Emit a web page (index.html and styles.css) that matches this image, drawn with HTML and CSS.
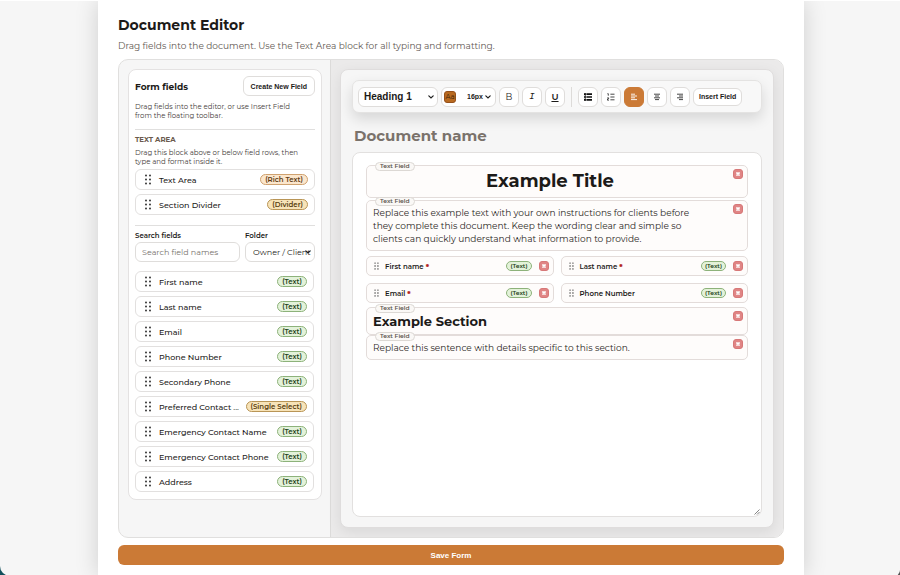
FILE: index.html
```html
<html lang="en">
<head>
    <meta charset="UTF-8">
    <meta name="viewport" content="width=device-width, initial-scale=1.0">
    <title>Document Editor</title>
    <link rel="stylesheet" href="styles.css">
</head>
<body>
    <!-- shared icons -->
    <svg class="sprite" aria-hidden="true">
        <symbol id="grip" viewBox="0 0 6 11">
            <circle cx="1" cy="1.5" r="0.9"/><circle cx="5" cy="1.5" r="0.9"/>
            <circle cx="1" cy="5.5" r="0.9"/><circle cx="5" cy="5.5" r="0.9"/>
            <circle cx="1" cy="9.5" r="0.9"/><circle cx="5" cy="9.5" r="0.9"/>
        </symbol>
        <symbol id="chevron" viewBox="0 0 6 4">
            <path d="M0.8 0.8 L3 3 L5.2 0.8" fill="none" stroke="#222" stroke-width="1.2" stroke-linecap="round"/>
        </symbol>
        <symbol id="cross" viewBox="0 0 4 4">
            <rect x="0.3" y="0.3" width="3.4" height="3.4" fill="#fff" opacity="0.65"/>
            <path d="M0.5 0.5 L3.5 3.5 M3.5 0.5 L0.5 3.5" stroke="#fff" stroke-width="1.2"/>
        </symbol>
    </svg>

    <main class="page">
        <h1>Document Editor</h1>
        <p class="subtitle">Drag fields into the document. Use the Text Area block for all typing and formatting.</p>

        <div class="workspace">
            <aside class="side">
                <div class="panel">
                    <div class="panel-head">
                        <h2>Form fields</h2>
                        <button class="btn" type="button">Create New Field</button>
                    </div>
                    <p class="hint">Drag fields into the editor, or use Insert Field<br>from the floating toolbar.</p>

                    <section class="group">
                        <h3>TEXT AREA</h3>
                        <p class="hint">Drag this block above or below field rows, then<br>type and format inside it.</p>
                        <ul class="list">
                            <li class="item"><svg class="grip"><use href="#grip"/></svg><span class="name">Text Area</span><span class="tag rich">(Rich Text)</span></li>
                            <li class="item"><svg class="grip"><use href="#grip"/></svg><span class="name">Section Divider</span><span class="tag amber">(Divider)</span></li>
                        </ul>
                    </section>

                    <section class="group">
                        <div class="filters">
                            <div>
                                <label for="search">Search fields</label>
                                <input id="search" class="control" type="text" placeholder="Search field names">
                            </div>
                            <div>
                                <label for="folder">Folder</label>
                                <div class="select">
                                    <select id="folder" class="control">
                                        <option>Owner / Client</option>
                                    </select>
                                    <svg class="chevron"><use href="#chevron"/></svg>
                                </div>
                            </div>
                        </div>
                        <ul class="list fields">
                            <li class="item"><svg class="grip"><use href="#grip"/></svg><span class="name">First name</span><span class="tag">(Text)</span></li>
                            <li class="item"><svg class="grip"><use href="#grip"/></svg><span class="name">Last name</span><span class="tag">(Text)</span></li>
                            <li class="item"><svg class="grip"><use href="#grip"/></svg><span class="name">Email</span><span class="tag">(Text)</span></li>
                            <li class="item"><svg class="grip"><use href="#grip"/></svg><span class="name">Phone Number</span><span class="tag">(Text)</span></li>
                            <li class="item"><svg class="grip"><use href="#grip"/></svg><span class="name">Secondary Phone</span><span class="tag">(Text)</span></li>
                            <li class="item"><svg class="grip"><use href="#grip"/></svg><span class="name">Preferred Contact ...</span><span class="tag amber">(Single Select)</span></li>
                            <li class="item"><svg class="grip"><use href="#grip"/></svg><span class="name">Emergency Contact Name</span><span class="tag">(Text)</span></li>
                            <li class="item"><svg class="grip"><use href="#grip"/></svg><span class="name">Emergency Contact Phone</span><span class="tag">(Text)</span></li>
                            <li class="item"><svg class="grip"><use href="#grip"/></svg><span class="name">Address</span><span class="tag">(Text)</span></li>
                        </ul>
                    </section>
                </div>
            </aside>

            <div class="stage">
                <div class="editor">
                    <div class="toolbar">
                        <div class="select heading">
                            <select class="tool" aria-label="Block style">
                                <option>Heading 1</option>
                            </select>
                            <svg class="chevron"><use href="#chevron"/></svg>
                        </div>
                        <div class="tool size">
                            <button class="swatch" type="button" aria-label="Text color">Aa</button>
                            <div class="select">
                                <select aria-label="Font size">
                                    <option>16px</option>
                                </select>
                                <svg class="chevron"><use href="#chevron"/></svg>
                            </div>
                        </div>
                        <button class="tool" type="button">B</button>
                        <button class="tool italic" type="button">I</button>
                        <button class="tool underline" type="button">U</button>
                        <span class="sep"></span>
                        <button class="tool" type="button" aria-label="Bulleted list">
                            <svg width="8" height="8" viewBox="0 0 8 8"><path d="M0 1.2h1.8M2.4 1.2H8M0 4h1.8M2.4 4H8M0 6.8h1.8M2.4 6.8H8" stroke="#111" stroke-width="1.7"/><path d="M1.2 0v8" stroke="#111" stroke-width="0.8"/></svg>
                        </button>
                        <button class="tool" type="button" aria-label="Numbered list">
                            <svg width="8" height="8" viewBox="0 0 8 8"><path d="M3.4 1.2H7.5M3.4 4H7.5M3.4 6.8H7.5" stroke="#333" stroke-width="0.9"/><path d="M0.4 0.7h0.9v2M0.3 4.8h1.3v1.1H0.5v1.3h1.4" fill="none" stroke="#222" stroke-width="0.8"/></svg>
                        </button>
                        <button class="tool active" type="button" aria-label="Align left">
                            <svg width="8" height="8" viewBox="0 0 8 8"><path d="M1 1.2h4M1 3h6M1 4.8h4M1 6.6h6" stroke="#fff" stroke-width="0.9"/></svg>
                        </button>
                        <button class="tool" type="button" aria-label="Align center">
                            <svg width="8" height="8" viewBox="0 0 8 8"><path d="M1 1.2h6M2 3h4M1 4.8h6M2 6.6h4" stroke="#333" stroke-width="0.9"/></svg>
                        </button>
                        <button class="tool" type="button" aria-label="Align right">
                            <svg width="8" height="8" viewBox="0 0 8 8"><path d="M1 1.2h6M3 3h4M1 4.8h6M3 6.6h4" stroke="#333" stroke-width="0.9"/></svg>
                        </button>
                        <button class="btn insert" type="button">Insert Field</button>
                    </div>

                    <input class="doc-name" type="text" placeholder="Document name" aria-label="Document name">

                    <div class="canvas">
                        <div class="block">
                            <span class="badge">Text Field</span>
                            <button class="remove" type="button" aria-label="Remove"><svg><use href="#cross"/></svg></button>
                            <h1 class="doc-title">Example Title</h1>
                        </div>
                        <div class="block">
                            <span class="badge">Text Field</span>
                            <button class="remove" type="button" aria-label="Remove"><svg><use href="#cross"/></svg></button>
                            <p>Replace this example text with your own instructions for clients before<br>they complete this document. Keep the wording clear and simple so<br>clients can quickly understand what information to provide.</p>
                        </div>
                        <div class="rows">
                            <div class="field"><svg class="grip"><use href="#grip"/></svg><span class="name">First name <b>*</b></span><span class="tag">(Text)</span><button class="remove" type="button" aria-label="Remove"><svg><use href="#cross"/></svg></button></div>
                            <div class="field"><svg class="grip"><use href="#grip"/></svg><span class="name">Last name <b>*</b></span><span class="tag">(Text)</span><button class="remove" type="button" aria-label="Remove"><svg><use href="#cross"/></svg></button></div>
                            <div class="field"><svg class="grip"><use href="#grip"/></svg><span class="name">Email <b>*</b></span><span class="tag">(Text)</span><button class="remove" type="button" aria-label="Remove"><svg><use href="#cross"/></svg></button></div>
                            <div class="field"><svg class="grip"><use href="#grip"/></svg><span class="name">Phone Number</span><span class="tag">(Text)</span><button class="remove" type="button" aria-label="Remove"><svg><use href="#cross"/></svg></button></div>
                        </div>
                        <div class="block tight">
                            <span class="badge">Text Field</span>
                            <button class="remove" type="button" aria-label="Remove"><svg><use href="#cross"/></svg></button>
                            <h2 class="doc-section">Example Section</h2>
                        </div>
                        <div class="block tight">
                            <span class="badge">Text Field</span>
                            <button class="remove" type="button" aria-label="Remove"><svg><use href="#cross"/></svg></button>
                            <p>Replace this sentence with details specific to this section.</p>
                        </div>
                        <svg class="resize" viewBox="0 0 6 6"><path d="M0.5 5.5L5.5 0.5M3 5.5L5.5 3" stroke="#777" stroke-width="0.9"/></svg>
                    </div>
                </div>
            </div>
        </div>

        <button class="save" type="submit">Save Form</button>
    </main>
</body>
</html>
```

FILE: styles.css
```css
*{
    box-sizing: border-box;
}
html{
    background: linear-gradient(90deg, #12505c 50%, #555 50%);
}
body{
    margin: 0;
    padding-left: 2px;
    min-height: 100vh;
    background: #f6f6f6;
    border-top: 1px solid #fff;
    border-radius: 0 0 6px 10px;
    color: #1c1a18;
    font-family: Montserrat, Inter, "Open Sans", sans-serif;
    font-size: 8px;
    overflow: hidden;
}
h1, h2, h3, p, ul{
    margin: 0;
    padding: 0;
}
button, input, select{
    margin: 0;
    font-family: inherit;
    color: inherit;
}
.sprite{
    position: absolute;
    width: 0;
    height: 0;
}
.page{
    display: flex;
    flex-direction: column;
    max-width: 706px;
    min-height: 100vh;
    margin: 0 auto;
    padding: 14px 20px 11px;
    background: #fff;
    box-shadow: 0 0 22px rgba(0, 0, 0, .16);
}
.page > h1{
    font-size: 14px;
    line-height: 20px;
}
.subtitle{
    margin-top: 4px;
    color: #5f5852;
    font-size: 9px;
    line-height: 14px;
}

/* two column workspace */
.workspace{
    flex: 1;
    display: grid;
    grid-template-columns: 212px 1fr;
    margin-top: 6px;
    border: 1px solid #e0dfde;
    border-radius: 10px;
    background: #f6f6f6;
    overflow: hidden;
}
.side{
    padding: 9px 8px 9px 9px;
    border-right: 1px solid #dcdbda;
}
.panel{
    padding: 6px 6px 7px;
    background: #fff;
    border: 1px solid #e4e2e2;
    border-radius: 8px;
}
.panel-head{
    display: flex;
    justify-content: space-between;
    align-items: center;
}
.panel-head h2{
    font-size: 9px;
}
.btn{
    height: 20px;
    padding: 0 7px;
    background: #fff;
    border: 1px solid #dfdddb;
    border-radius: 6px;
    font-family: "Liberation Sans", Arial, sans-serif;
    font-size: 7px;
    font-weight: bold;
}
.hint{
    color: #46403b;
    font-size: 7px;
    line-height: 9px;
}
.panel-head + .hint{
    margin-top: 6px;
}
.group{
    margin-top: 9px;
    padding-top: 5px;
    border-top: 1px solid #e0dfde;
}
.group h3{
    margin-bottom: 3px;
    color: #6a5a4c;
    font-size: 7px;
    line-height: 10px;
}
.list{
    display: grid;
    gap: 4px;
    margin-top: 3px;
    list-style: none;
}
.item{
    display: flex;
    align-items: center;
    height: 21px;
    padding: 0 6px 0 9px;
    background: #fff;
    border: 1px solid #e2e0df;
    border-radius: 6px;
}
.grip{
    flex: none;
    width: 6px;
    height: 11px;
    fill: #222;
}
.name{
    flex: 1;
    margin-left: 8px;
    font-size: 8px;
    font-weight: 500;
    white-space: nowrap;
}
.tag{
    padding: 0 4px;
    background: #e3f2d9;
    border: 1px solid #8db27a;
    border-radius: 6px;
    color: #24421a;
    font-size: 7px;
    font-weight: 600;
    line-height: 9px;
}
.tag.rich{
    background: #fbe6cc;
    border-color: #cfa270;
    color: #5e3a12;
}
.tag.amber{
    background: #f7e3b8;
    border-color: #b99556;
    color: #59400f;
}
.group + .group{
    margin-top: 10px;
}
.filters{
    display: grid;
    grid-template-columns: 3fr 2fr;
    gap: 5px;
}
.filters label{
    display: block;
    margin-bottom: 2px;
    font-size: 7px;
    font-weight: 600;
    line-height: 9px;
}
.control{
    display: block;
    width: 100%;
    height: 20px;
    padding: 0 6px;
    background: #fff;
    border: 1px solid #dfdddb;
    border-radius: 6px;
    font-size: 8px;
}
.control::placeholder{
    color: #77716c;
}
.select{
    position: relative;
}
.select select{
    appearance: none;
}
.chevron{
    position: absolute;
    right: 4px;
    top: 50%;
    width: 6px;
    height: 4px;
    margin-top: -2px;
    pointer-events: none;
}
.select .control{
    padding: 0 2px 0 7px;
}
.fields{
    margin: 9px 1px 0 0;
}

/* document side */
.stage{
    display: flex;
    padding: 9px;
    background: #ebeaea;
}
.editor{
    flex: 1;
    display: flex;
    flex-direction: column;
    padding: 10px 11px;
    background: #f6f6f6;
    border: 1px solid #dfdddd;
    border-radius: 8px;
    box-shadow: 0 4px 14px rgba(0, 0, 0, .08);
}
.toolbar{
    display: flex;
    align-items: center;
    gap: 3px;
    height: 33px;
    padding: 0 5px;
    background: #f8f8f8;
    border: 1px solid #e4e3e2;
    border-radius: 7px;
    box-shadow: 0 6px 14px rgba(0, 0, 0, .13);
}
.tool{
    display: flex;
    align-items: center;
    justify-content: center;
    width: 20px;
    height: 20px;
    padding: 0;
    background: #fff;
    border: 1px solid #dfdddb;
    border-radius: 6px;
    font-size: 9px;
}
.heading .tool{
    width: 80px;
    padding-left: 5px;
    font-family: "Liberation Sans", Arial, sans-serif;
    font-size: 10px;
    font-weight: bold;
}
.size{
    justify-content: space-between;
    width: 55px;
    padding-left: 2px;
}
.swatch{
    width: 12px;
    height: 12px;
    padding: 0;
    background: #b96a20;
    border: 1px solid #95501a;
    border-radius: 3px;
    color: #3a1f08;
    font-size: 7px;
    line-height: 10px;
}
.size select{
    width: 28px;
    padding: 0;
    background: none;
    border: 0;
    font-family: "Liberation Sans", Arial, sans-serif;
    font-size: 7px;
    font-weight: bold;
}
.italic{
    font-family: "Liberation Mono", monospace;
    font-style: italic;
}
.underline{
    font-weight: 600;
    text-decoration: underline;
}
.active{
    background: #cb7a36;
    border-color: #cb7a36;
}
.sep{
    width: 1px;
    height: 20px;
    margin: 0 3px;
    background: #dddbd9;
}
.insert{
    height: 18px;
    padding: 0 5px;
}
.doc-name{
    width: 100%;
    height: 20px;
    margin-top: 12px;
    padding: 0 2px;
    background: none;
    border: 0;
    font-size: 15px;
    font-weight: bold;
}
.doc-name::placeholder{
    color: #7a726b;
}
.canvas{
    position: relative;
    flex: 1;
    margin-top: 7px;
    padding: 12px 13px;
    background: #fff;
    border: 1px solid #e2e0df;
    border-radius: 8px;
}
.block{
    position: relative;
    margin-bottom: 2px;
    padding: 5px 20px 5px 6px;
    background: #fefcfb;
    border: 1px solid #e3dcda;
    border-radius: 5px;
}
.block p{
    color: #2c2825;
    font-size: 9px;
    line-height: 13px;
}
.badge{
    position: absolute;
    top: -4px;
    left: 8px;
    padding: 0 4px;
    background: #faf8f6;
    border: 1px solid #dcd8d4;
    border-radius: 5px;
    color: #5d554e;
    font-size: 6px;
    font-weight: 600;
    line-height: 7px;
}
.remove{
    display: flex;
    align-items: center;
    justify-content: center;
    width: 10px;
    height: 10px;
    padding: 0;
    background: #e08585;
    border: 1px solid #d77878;
    border-radius: 3px;
}
.remove svg{
    width: 4px;
    height: 4px;
}
.block .remove{
    position: absolute;
    top: 3px;
    right: 4px;
}
.doc-title{
    font-size: 18px;
    line-height: 21px;
    text-align: center;
}
.doc-section{
    font-size: 13px;
    line-height: 16px;
}
.rows{
    display: grid;
    grid-template-columns: 1fr 1fr;
    gap: 7px;
    margin: 5px 0 4px;
}
.field{
    display: flex;
    align-items: center;
    height: 20px;
    padding: 0 4px 0 7px;
    background: #fefcfb;
    border: 1px solid #e3dcda;
    border-radius: 5px;
}
.field .grip{
    width: 5px;
    height: 8px;
}
.field .name{
    margin-left: 6px;
    font-size: 7px;
    font-weight: 600;
}
.field .name b{
    color: #b3261e;
}
.field .tag{
    margin-right: 7px;
    padding: 0 3px;
    font-size: 6px;
    line-height: 8px;
}
.tight{
    margin-bottom: 0;
}
.resize{
    position: absolute;
    right: 1px;
    bottom: 1px;
    width: 6px;
    height: 6px;
}
.save{
    display: block;
    flex: none;
    width: 100%;
    height: 20px;
    margin-top: 7px;
    background: #cb7a36;
    border: 0;
    border-radius: 6px;
    color: #fff;
    font-family: "Liberation Sans", Arial, sans-serif;
    font-size: 8px;
    font-weight: bold;
}
```
